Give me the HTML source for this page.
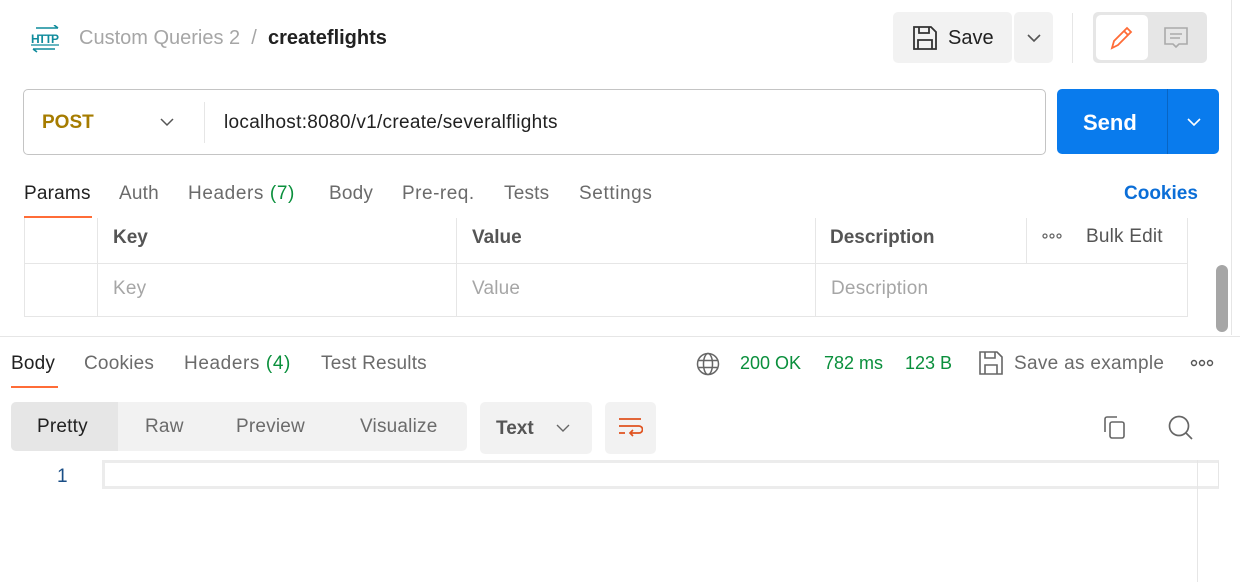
<!DOCTYPE html>
<html><head><meta charset="utf-8"><style>
*{box-sizing:border-box;margin:0;padding:0}
body{width:1240px;height:582px;background:#fff;font-family:"Liberation Sans",sans-serif;position:relative;overflow:hidden;color:#212121}
.a{position:absolute;white-space:nowrap}
.t{font-size:19px;color:#6b6b6b;letter-spacing:0.2px}
</style></head><body>
<!-- top -->
<svg class="a" style="left:30px;top:25px" width="32" height="28" viewBox="0 0 32 28"><g stroke="#0f8b9c" stroke-width="1.6" fill="none"><path d="M6 3h22M24 0l4 3"/><path d="M3 24h22M7 27l-4-3"/></g><text x="1" y="18" font-size="12" font-family="Liberation Sans" fill="#0f8b9c" font-weight="bold" textLength="28">HTTP</text><path d="M1 20h28" stroke="#0f8b9c" stroke-width="1.2"/></svg>
<div class="a" style="left:79px;top:27px;font-size:20px;color:#a6a6a6">Custom Queries 2 &nbsp;/ &nbsp;<span style="color:#212121;font-weight:bold">createflights</span></div>
<div class="a" style="left:893px;top:12px;width:119px;height:51px;background:#f2f2f2;border-radius:5px"></div>
<svg class="a" style="left:912px;top:25px" width="26" height="26" viewBox="0 0 26 26" fill="none" stroke="#333" stroke-width="1.8"><path d="M2 2h17l5 5v17H2z"/><path d="M7 2v6h10V2M6 24v-9h14v9"/></svg>
<div class="a" style="left:948px;top:27px;font-size:20px;color:#212121">Save</div>
<div class="a" style="left:1014px;top:12px;width:39px;height:51px;background:#f2f2f2;border-radius:5px"></div>
<svg class="a" style="left:1026px;top:33px" width="16" height="10"><path d="M2 2l6 6 6-6" stroke="#555" stroke-width="1.6" fill="none"/></svg>
<div class="a" style="left:1072px;top:13px;width:1px;height:50px;background:#e6e6e6"></div>
<div class="a" style="left:1093px;top:12px;width:114px;height:51px;background:#e6e6e6;border-radius:5px"></div>
<div class="a" style="left:1096px;top:15px;width:52px;height:45px;background:#fff;border-radius:5px"></div>
<svg class="a" style="left:1108px;top:24px" width="28" height="26" viewBox="0 0 28 26" fill="none" stroke="#ff6c37" stroke-width="1.8"><path d="M4 24l2-7L19 4l4 4L10 21z"/><path d="M16 7l4 4"/></svg>
<svg class="a" style="left:1162px;top:26px" width="28" height="24" viewBox="0 0 28 24" fill="none" stroke="#aaa" stroke-width="1.6"><path d="M3 2h22v16H17l-3 3-3-3H3z"/><path d="M8 8h12M8 12h10"/></svg>
<div class="a" style="left:1231px;top:0;width:1px;height:335px;background:#e6e6e6"></div>
<!-- url bar -->
<div class="a" style="left:23px;top:89px;width:1023px;height:66px;border:1px solid #c4c4c4;border-radius:5px"></div>
<div class="a" style="left:42px;top:112px;font-size:19px;font-weight:bold;color:#a67c00">POST</div>
<svg class="a" style="left:159px;top:117px" width="16" height="10"><path d="M2 2l6 6 6-6" stroke="#555" stroke-width="1.5" fill="none"/></svg>
<div class="a" style="left:204px;top:102px;width:1px;height:41px;background:#e6e6e6"></div>
<div class="a" style="left:224px;top:112px;font-size:19px;color:#212121;letter-spacing:0.3px">localhost:8080/v1/create/severalflights</div>
<div class="a" style="left:1057px;top:89px;width:162px;height:65px;background:#097bed;border-radius:5px"></div>
<div class="a" style="left:1167px;top:89px;width:1px;height:65px;background:#0865c4"></div>
<div class="a" style="left:1083px;top:110px;font-size:22px;font-weight:bold;color:#fff">Send</div>
<svg class="a" style="left:1186px;top:117px" width="16" height="10"><path d="M2 2l6 6 6-6" stroke="#fff" stroke-width="1.6" fill="none"/></svg>
<!-- tabs -->
<div class="a t" style="left:24px;top:183px;color:#212121">Params</div>
<div class="a" style="left:24px;top:216px;width:68px;height:2px;background:#ff6c37"></div>
<div class="a t" style="left:119px;top:183px">Auth</div>
<div class="a t" style="left:188px;top:183px;letter-spacing:0.6px">Headers <span style="color:#0a8f3c">(7)</span></div>
<div class="a t" style="left:329px;top:183px">Body</div>
<div class="a t" style="left:402px;top:183px;letter-spacing:0.5px">Pre-req.</div>
<div class="a t" style="left:504px;top:183px">Tests</div>
<div class="a t" style="left:579px;top:183px;letter-spacing:0.6px">Settings</div>
<div class="a" style="left:1124px;top:183px;font-size:19px;font-weight:bold;color:#0b6ed7">Cookies</div>
<!-- table -->
<div class="a" style="left:24px;top:218px;width:1164px;height:99px;border-left:1px solid #e6e6e6;border-right:1px solid #e6e6e6;border-bottom:1px solid #e6e6e6"></div>
<div class="a" style="left:24px;top:263px;width:1164px;height:1px;background:#e6e6e6"></div>
<div class="a" style="left:97px;top:218px;width:1px;height:99px;background:#e6e6e6"></div>
<div class="a" style="left:456px;top:218px;width:1px;height:99px;background:#e6e6e6"></div>
<div class="a" style="left:815px;top:218px;width:1px;height:99px;background:#e6e6e6"></div>
<div class="a" style="left:1026px;top:218px;width:1px;height:45px;background:#e6e6e6"></div>
<div class="a" style="left:113px;top:227px;font-size:19px;font-weight:bold;color:#555">Key</div>
<div class="a" style="left:472px;top:227px;font-size:19px;font-weight:bold;color:#555">Value</div>
<div class="a" style="left:830px;top:227px;font-size:19px;font-weight:bold;color:#555">Description</div>
<svg class="a" style="left:1042px;top:233px" width="22" height="6"><g fill="none" stroke="#666" stroke-width="1.3"><circle cx="3" cy="3" r="2"/><circle cx="10" cy="3" r="2"/><circle cx="17" cy="3" r="2"/></g></svg>
<div class="a t" style="left:1086px;top:226px;color:#555">Bulk Edit</div>
<div class="a t" style="left:113px;top:278px;color:#a6a6a6">Key</div>
<div class="a t" style="left:472px;top:278px;color:#a6a6a6">Value</div>
<div class="a t" style="left:831px;top:278px;color:#a6a6a6">Description</div>
<div class="a" style="left:1216px;top:265px;width:12px;height:67px;background:#a6a6a6;border-radius:6px"></div>
<div class="a" style="left:0;top:336px;width:1240px;height:1px;background:#e6e6e6"></div>
<!-- response tabs -->
<div class="a t" style="left:11px;top:353px;color:#212121">Body</div>
<div class="a" style="left:11px;top:386px;width:47px;height:2px;background:#ff6c37"></div>
<div class="a t" style="left:84px;top:353px">Cookies</div>
<div class="a t" style="left:184px;top:353px;letter-spacing:0.6px">Headers <span style="color:#0a8f3c">(4)</span></div>
<div class="a t" style="left:321px;top:353px">Test Results</div>
<svg class="a" style="left:695px;top:351px" width="26" height="26" viewBox="0 0 26 26" fill="none" stroke="#666" stroke-width="1.5"><circle cx="13" cy="13" r="10.5"/><ellipse cx="13" cy="13" rx="4.5" ry="10.5"/><path d="M3 9.5h20M3 16.5h20"/></svg>
<div class="a" style="left:740px;top:353px;font-size:18px;color:#0a8f3c">200 OK</div>
<div class="a" style="left:824px;top:353px;font-size:18px;color:#0a8f3c">782 ms</div>
<div class="a" style="left:905px;top:353px;font-size:18px;color:#0a8f3c">123 B</div>
<svg class="a" style="left:978px;top:350px" width="26" height="26" viewBox="0 0 26 26" fill="none" stroke="#666" stroke-width="1.6"><path d="M2 2h17l5 5v17H2z"/><path d="M7 2v6h10V2M7 24v-9h12v9"/></svg>
<div class="a t" style="left:1014px;top:353px;letter-spacing:0.3px">Save as example</div>
<svg class="a" style="left:1190px;top:359px" width="26" height="8"><g fill="none" stroke="#555" stroke-width="1.4"><circle cx="4" cy="4" r="2.5"/><circle cx="12" cy="4" r="2.5"/><circle cx="20" cy="4" r="2.5"/></g></svg>
<!-- toolbar -->
<div class="a" style="left:11px;top:402px;width:456px;height:49px;background:#f2f2f2;border-radius:5px"></div>
<div class="a" style="left:11px;top:402px;width:107px;height:49px;background:#e6e6e6;border-radius:5px 0 0 5px"></div>
<div class="a t" style="left:37px;top:416px;color:#212121">Pretty</div>
<div class="a t" style="left:145px;top:416px">Raw</div>
<div class="a t" style="left:236px;top:416px">Preview</div>
<div class="a t" style="left:360px;top:416px">Visualize</div>
<div class="a" style="left:480px;top:402px;width:112px;height:52px;background:#f2f2f2;border-radius:5px"></div>
<div class="a" style="left:496px;top:418px;font-size:19px;font-weight:bold;color:#555">Text</div>
<svg class="a" style="left:555px;top:423px" width="16" height="10"><path d="M2 2l6 6 6-6" stroke="#666" stroke-width="1.4" fill="none"/></svg>
<div class="a" style="left:605px;top:402px;width:51px;height:52px;background:#f2f2f2;border-radius:5px"></div>
<svg class="a" style="left:617px;top:415px" width="26" height="26" viewBox="0 0 26 26" fill="none" stroke="#e0531f" stroke-width="1.7"><path d="M2 4h22M2 11h20a3 3 0 010 7H13M16 15l-3 3 3 3M2 18h6"/></svg>
<svg class="a" style="left:1102px;top:414px" width="28" height="28" viewBox="0 0 28 28" fill="none" stroke="#666" stroke-width="1.6"><rect x="8" y="8" width="14" height="16" rx="2"/><path d="M3 18V5a2 2 0 012-2h10"/></svg>
<svg class="a" style="left:1167px;top:414px" width="28" height="28" viewBox="0 0 28 28" fill="none" stroke="#666" stroke-width="1.7"><circle cx="12" cy="12" r="9.5"/><path d="M19 19l6 6"/></svg>
<!-- editor -->
<div class="a" style="left:57px;top:466px;font-size:19px;color:#1a4e86">1</div>
<div class="a" style="left:102px;top:460px;width:1117px;height:29px;border:3px solid #ececec;border-right:1px solid #e6e6e6"></div>
<div class="a" style="left:1197px;top:460px;width:1px;height:122px;background:#e6e6e6"></div>
</body></html>
